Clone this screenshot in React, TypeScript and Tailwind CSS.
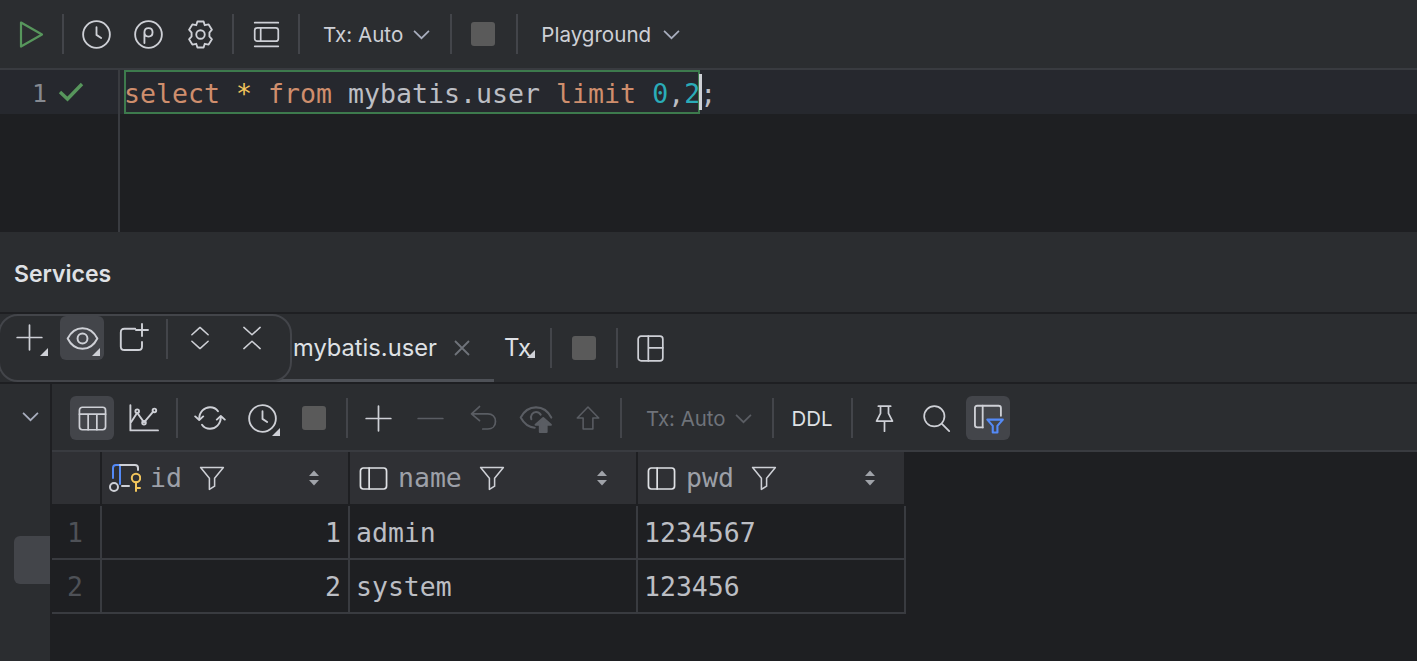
import type { ReactNode } from "react";

const MONO = "font-['DejaVu_Sans_Mono',monospace]";

function Icon({ children, size = 29, className = "" }: { children: ReactNode; size?: number; className?: string }) {
  return (
    <svg
      viewBox="0 0 16 16"
      width={size}
      height={size}
      fill="none"
      stroke="currentColor"
      strokeWidth="0.95"
      strokeLinecap="round"
      strokeLinejoin="round"
      className={className}
    >
      {children}
    </svg>
  );
}

const ClockIcon = () => (
  <Icon size={31}>
    <circle cx="8" cy="8" r="6.9" />
    <path d="M8 4.2V8.2L10.4 9.8" />
  </Icon>
);
const StopIcon = () => <div className="w-6 h-6 rounded-[3px] bg-[#5a5a5a]" />;
const PlusIcon = ({ className = "" }: { className?: string }) => (
  <Icon className={className}>
    <path d="M8 1.2V14.8M1.2 8H14.8" />
  </Icon>
);
const Chevron = ({ className = "text-[#a8adbd]" }: { className?: string }) => (
  <svg viewBox="0 0 16 10" width="17" height="11" fill="none" stroke="currentColor" strokeWidth="1.6" className={className}>
    <path d="M1 1.5L8 8.5L15 1.5" />
  </svg>
);
const ColumnIcon = () => (
  <Icon>
    <rect x="0.8" y="2.2" width="14.4" height="11.6" rx="1.6" />
    <path d="M5.6 2.2V13.8" />
  </Icon>
);
const FilterIcon = () => (
  <Icon size={26} className="text-[#ced0d6]">
    <path d="M1 1.5H15L9.6 8.2V13L6.4 15V8.2Z" />
  </Icon>
);
const SortIcon = () => (
  <svg width="12" height="16" viewBox="0 0 12 16" className="text-[#a0a3a9]" fill="currentColor">
    <path d="M6 0.5L11 6H1Z" />
    <path d="M6 15.5L1 10H11Z" />
  </svg>
);
const Corner = ({ className = "right-1 bottom-1" }: { className?: string }) => (
  <svg width="8" height="8" viewBox="0 0 8 8" className={`absolute ${className}`} fill="#ced0d6">
    <path d="M8 0V8H0Z" />
  </svg>
);

function Btn({ children, active, className = "" }: { children: ReactNode; active?: boolean; className?: string }) {
  return (
    <div className={`relative w-11 h-11 rounded-md flex items-center justify-center shrink-0 ${active ? "bg-[#43454a]" : ""} ${className}`}>
      {children}
    </div>
  );
}

const Sep = ({ className = "" }: { className?: string }) => <div className={`w-0.5 h-10 bg-[#43454a] shrink-0 ${className}`} />;

function HeaderCell({ icon, label, className }: { icon: ReactNode; label: string; className: string }) {
  return (
    <div className={`flex items-center h-[54px] bg-[#2f3034] border-r-2 border-b-2 border-[#1e1f22] ${className}`}>
      {icon}
      <span className={`${MONO} text-[26.5px] text-[#9da0a8] ml-2.5 leading-none`}>{label}</span>
    </div>
  );
}

const ROWS = [
  { n: "1", id: "1", name: "admin", pwd: "1234567" },
  { n: "2", id: "2", name: "system", pwd: "123456" },
];

export default function App() {
  return (
    <div className="relative w-[1417px] h-[661px] overflow-hidden bg-[#2b2d30] text-[#dfe1e5] font-['Inter',sans-serif]">
      {/* main toolbar */}
      <div className="h-[70px] border-b-2 border-[#393b40] flex items-center text-[#ced0d6]">
        <div className="w-[62px] flex justify-center">
          <svg width="27" height="29" viewBox="0 0 27 29" fill="none" stroke="#57965c" strokeWidth="2.2" strokeLinejoin="round">
            <path d="M3 2.5L24 14.5L3 26.5Z" />
          </svg>
        </div>
        <Sep />
        <Btn className="ml-[10px]"><ClockIcon /></Btn>
        <Btn className="ml-2">
          <Icon size={31}>
            <circle cx="8" cy="8" r="6.9" />
            <path d="M5.9 12.4V6.8M5.9 6.9C5.9 5.6 6.8 4.7 8 4.7C9.2 4.7 10.1 5.6 10.1 6.9C10.1 8.2 9.2 9.1 8 9.1C6.8 9.1 5.9 8.2 5.9 6.9Z" />
          </Icon>
        </Btn>
        <Btn className="ml-2">
          <Icon size={31}>
            <circle cx="8" cy="8" r="2.2" />
            <path d="M6.4 1.3H9.6L10.2 3.2L12.2 2.8L13.9 5.5L12.6 7V9L13.9 10.5L12.2 13.2L10.2 12.8L9.6 14.7H6.4L5.8 12.8L3.8 13.2L2.1 10.5L3.4 9V7L2.1 5.5L3.8 2.8L5.8 3.2Z" />
          </Icon>
        </Btn>
        <Sep className="ml-[10px]" />
        <Btn className="ml-[10px]">
          <Icon>
            <path d="M1.5 1.5H14.5M1.5 14.5H14.5" />
            <rect x="1.5" y="4.3" width="13" height="7.4" rx="1.4" />
            <path d="M4.8 4.3V11.7" />
          </Icon>
        </Btn>
        <Sep className="ml-[10px]" />
        <span className="ml-[23px] pt-0.5 text-[20.6px] whitespace-nowrap">Tx: Auto</span>
        <Chevron className="ml-2.5 text-[#a8adbd]" />
        <Sep className="ml-5" />
        <Btn className="ml-[9px]"><StopIcon /></Btn>
        <Sep className="ml-[11px]" />
        <span className="ml-[23px] pt-0.5 text-[20.6px] whitespace-nowrap">Playground</span>
        <Chevron className="ml-3 text-[#a8adbd]" />
      </div>

      {/* editor */}
      <div className="h-[162px] bg-[#1e1f22] flex relative">
        <div className="w-[120px] shrink-0 border-r-2 border-[#393b40]">
          <div className="h-11 bg-[#26282e] flex items-center text-[#868a91]">
            <span className={`${MONO} text-[25px] ml-8 leading-none pt-0.5`}>1</span>
            <svg width="26" height="20" viewBox="0 0 26 20" fill="none" stroke="#57965c" strokeWidth="3.4" className="ml-[11px]">
              <path d="M2 10L9.5 17L24 2" />
            </svg>
          </div>
        </div>
        <div className="flex-1">
          <div className="h-11 bg-[#26282e] pl-1 pt-1 relative flex items-center">
            <div className={`${MONO} text-[26.58px] leading-none whitespace-pre text-[#bcbec4]`}>
              <span className="text-[#cf8e6d]">select</span> <span className="text-[#f2c55c]">*</span>{" "}
              <span className="text-[#cf8e6d]">from</span> mybatis.user <span className="text-[#cf8e6d]">limit</span>{" "}
              <span className="text-[#2aacb8]">0</span>,<span className="text-[#2aacb8]">2</span>;
            </div>
            <div className="absolute left-1 top-0 w-[576px] h-11 border-2 border-[#3d7a4d]" />
            <div className="absolute left-[579px] top-1 w-[3px] h-9 bg-[#ced0d6]" />
          </div>
        </div>
      </div>

      {/* services title */}
      <div className="h-[80px] flex items-center pl-3.5 pt-1 text-[23px] font-semibold">Services</div>

      {/* tabs row */}
      <div className="border-t-2 border-b-2 border-[#1e1f22] h-[72px] flex items-center relative">
        <div className="w-[226px] shrink-0" />
        <div className="w-[268px] shrink-0 h-full flex items-center relative">
          <span className="ml-[67px] text-[23.7px] whitespace-nowrap">mybatis.user</span>
          <svg width="16" height="16" viewBox="0 0 16 16" stroke="#6f737a" strokeWidth="1.8" className="ml-[17px]">
            <path d="M1 1L15 15M15 1L1 15" />
          </svg>
          <div className="absolute left-0 right-0 bottom-0 h-[3px] bg-[#4e5157]" />
        </div>
        <div className="relative ml-[10px] w-[30px] text-[24px] leading-none">
          Tx
          <Corner className="-right-[1px] bottom-0.5" />
        </div>
        <Sep className="ml-4" />
        <Btn className="ml-[10px]"><StopIcon /></Btn>
        <Sep className="ml-[10px]" />
        <Btn className="ml-[10px] text-[#ced0d6]">
          <Icon size={29}>
            <rect x="1.2" y="1.2" width="13.6" height="13.6" rx="1.6" />
            <path d="M6.8 1.2V14.8M6.8 7.6H14.8" />
          </Icon>
        </Btn>
      </div>

      {/* results */}
      <div className="flex h-[277px]">
        <div className="w-[50px] shrink-0 relative">
          <div className="flex justify-center pt-[27px] ml-[10px]"><Chevron className="text-[#a8adbd]" /></div>
          <div className="absolute left-3.5 top-[152px] w-9 h-12 rounded-l-md bg-[#43454a]" />
        </div>
        <div className="flex-1 border-l-2 border-[#1e1f22] flex flex-col min-w-0">
          <div className="h-[68px] shrink-0 border-b-2 border-[#393b40] flex items-center pl-[18px] pt-0.5 text-[#ced0d6]">
            <Btn active>
              <Icon>
                <rect x="0.8" y="1.8" width="14.4" height="12.4" rx="1.6" />
                <path d="M0.8 5.6H15.2M5.6 5.6V14.2M10.4 5.6V14.2" />
              </Icon>
            </Btn>
            <Btn className="ml-2">
              <Icon size={32}>
                <path d="M1.2 1.6V14.2H15" />
                <path d="M1.6 10L4.6 5.4L8 10.2L12.6 4.8" />
                <circle cx="4.6" cy="4.6" r="0.9" />
                <circle cx="8" cy="10.4" r="0.9" />
                <circle cx="13.2" cy="4.2" r="0.9" />
              </Icon>
            </Btn>
            <Sep className="ml-[10px]" />
            <Btn className="ml-2.5">
              <Icon size={32}>
                <path d="M2.6 8.4C2.6 5 5.2 2.6 8 2.6C9.8 2.6 11.2 3.4 12 4.6" />
                <path d="M13.4 7.6C13.4 11 10.8 13.4 8 13.4C6.2 13.4 4.8 12.6 4 11.4" />
                <path d="M0.6 7.2L2.6 9L4.6 7.2M11.4 8.8L13.4 7L15.4 8.8" />
              </Icon>
            </Btn>
            <Btn className="ml-2">
              <ClockIcon />
              <Corner />
            </Btn>
            <Btn className="ml-2"><StopIcon /></Btn>
            <Sep className="ml-[10px]" />
            <Btn className="ml-2"><PlusIcon /></Btn>
            <Btn className="ml-[8px] text-[#5a5d63]">
              <Icon><path d="M1.2 8H14.8" /></Icon>
            </Btn>
            <Btn className="ml-[9px] text-[#5a5d63]">
              <Icon>
                <path d="M5.8 1.4L1.4 5.4L5.8 9.2M1.4 5.4H10.4C12.8 5.4 14.6 7 14.6 9.6C14.6 12.2 12.8 13.8 10.4 13.8H7.6" />
              </Icon>
            </Btn>
            <Btn className="ml-[9px] text-[#5a5d63]">
              <Icon size={34}>
                <path d="M7.4 12.6C4.4 12.4 2.2 10.4 0.8 7.8C2.2 5 4.8 3 8 3C11.2 3 13.8 5 15.2 7.8" />
                <path d="M5.8 8.6C5.2 6.8 6.4 5.2 8 5.2C9 5.2 9.8 5.8 10.2 6.4" />
                <path d="M11.4 8L15 11.2H13V14.6H9.8V11.2H7.8Z" fill="currentColor" />
              </Icon>
            </Btn>
            <Btn className="ml-2 text-[#5a5d63]">
              <Icon size={26}>
                <path d="M8 1.2L14.6 8H11V14.8H5V8H1.4Z" />
              </Icon>
            </Btn>
            <Sep className="ml-2.5" />
            <span className="ml-6 pt-0.5 text-[20.4px] text-[#6f737a] whitespace-nowrap">Tx: Auto</span>
            <Chevron className="ml-[10px] text-[#5a5d63]" />
            <Sep className="ml-[20px]" />
            <span className="ml-[17px] pt-0.5 text-[20.4px] text-[#dfe1e5]">DDL</span>
            <Sep className="ml-[19px]" />
            <Btn className="ml-[9px]">
              <Icon>
                <path d="M4.6 1.2H11.4M5.8 1.2V5.2L3.6 9.4H12.4L10.2 5.2V1.2M8 9.4V15" />
              </Icon>
            </Btn>
            <Btn className="ml-2">
              <Icon>
                <circle cx="6.8" cy="6.8" r="5.6" />
                <path d="M11 11L15 15" />
              </Icon>
            </Btn>
            <Btn active className="ml-2">
              <Icon size={31}>
                <path d="M5 12.6H2.2C1.4 12.6 1 12.2 1 11.4V2.6C1 1.8 1.4 1.4 2.2 1.4H13.2C14 1.4 14.4 1.8 14.4 2.6V6.6" />
                <path d="M5 1.4V12.6" />
                <path d="M7.4 8.6H15.4L12.6 11.8V15.2H10.2V11.8Z" stroke="#548af7" strokeWidth="1.1" />
              </Icon>
            </Btn>
          </div>

          {/* data grid */}
          <div className="flex-1 bg-[#1e1f22]">
            <div className="grid grid-cols-[50px_248px_288px_268px] w-fit">
              <div className="h-[54px] bg-[#2f3034] border-r-2 border-b-2 border-[#1e1f22]" />
              <HeaderCell
                className="pl-2"
                label="id"
                icon={
                  <svg width="32" height="30" viewBox="0 0 32 30" fill="none" strokeWidth="2" strokeLinecap="round" className="-ml-px -mr-px">
                    <path d="M4 15V5C4 3 5 2 7 2H11V21" stroke="#548af7" />
                    <path d="M11 2H26C28 2 29 3 29 5V7" stroke="#ced0d6" />
                    <path d="M13 23H20" stroke="#ced0d6" />
                    <circle cx="5" cy="24" r="4" stroke="#ced0d6" />
                    <circle cx="27" cy="15" r="4.2" stroke="#f2c55c" />
                    <path d="M27 19V28M27 25H31" stroke="#f2c55c" />
                  </svg>
                }
              />
              <HeaderCell className="pl-[9px]" label="name" icon={<ColumnIcon />} />
              <HeaderCell className="pl-[9px]" label="pwd" icon={<ColumnIcon />} />
              {ROWS.map((r) => (
                <div key={r.n} className="contents">
                  <div className={`${MONO} h-[54px] pt-0.5 border-r-2 border-b-2 border-[#393b40] text-[26.5px] text-[#4e5157] flex items-center pl-[15px]`}>{r.n}</div>
                  <div className={`${MONO} h-[54px] pt-0.5 border-r-2 border-b-2 border-[#393b40] text-[26.5px] text-[#bcbec4] flex items-center justify-end pr-[7px]`}>{r.id}</div>
                  <div className={`${MONO} h-[54px] pt-0.5 border-r-2 border-b-2 border-[#393b40] text-[26.5px] text-[#bcbec4] flex items-center pl-[6px]`}>{r.name}</div>
                  <div className={`${MONO} h-[54px] pt-0.5 border-r-2 border-b-2 border-[#393b40] text-[26.5px] text-[#bcbec4] flex items-center pl-[6px]`}>{r.pwd}</div>
                </div>
              ))}
            </div>
          </div>
        </div>
      </div>

      {/* header filter + sort overlays */}
      {[199, 479, 751].map((x) => (
        <div key={x} className="absolute top-[465px]" style={{ left: x }}><FilterIcon /></div>
      ))}
      {[308, 596, 864].map((x) => (
        <div key={x} className="absolute top-[470px]" style={{ left: x }}><SortIcon /></div>
      ))}

      {/* floating toolbar */}
      <div className="absolute -left-0.5 top-[314px] w-[294px] h-[68px] rounded-[20px] border-2 border-[#43454a] bg-[#2b2d30] flex items-start pl-2 text-[#ced0d6]">
        <Btn>
          <PlusIcon className="-ml-0.5 -mt-0.5" />
          <Corner />
        </Btn>
        <Btn active className="ml-2">
          <Icon size={33}>
            <path d="M0.8 8C2.4 4.8 5 3 8 3C11 3 13.6 4.8 15.2 8C13.6 11.2 11 13 8 13C5 13 2.4 11.2 0.8 8Z" />
            <circle cx="8" cy="8" r="2.4" />
          </Icon>
          <Corner />
        </Btn>
        <Btn className="ml-2">
          <Icon size={32}>
            <path d="M8.6 3.4H3.2C2 3.4 1.4 4 1.4 5.2V12.2C1.4 13.4 2 14 3.2 14H10.2C11.4 14 12 13.4 12 12.2V10" />
            <path d="M12 1V7M9 4H15" />
          </Icon>
        </Btn>
        <Sep className="ml-[10px] mt-[3px]" />
        <Btn className="ml-2.5">
          <Icon size={26}>
            <path d="M3 6L8 1.5L13 6M3 10L8 14.5L13 10" />
          </Icon>
        </Btn>
        <Btn className="ml-2">
          <Icon size={26}>
            <path d="M3 1.5L8 6L13 1.5M3 14.5L8 10L13 14.5" />
          </Icon>
        </Btn>
      </div>
    </div>
  );
}
